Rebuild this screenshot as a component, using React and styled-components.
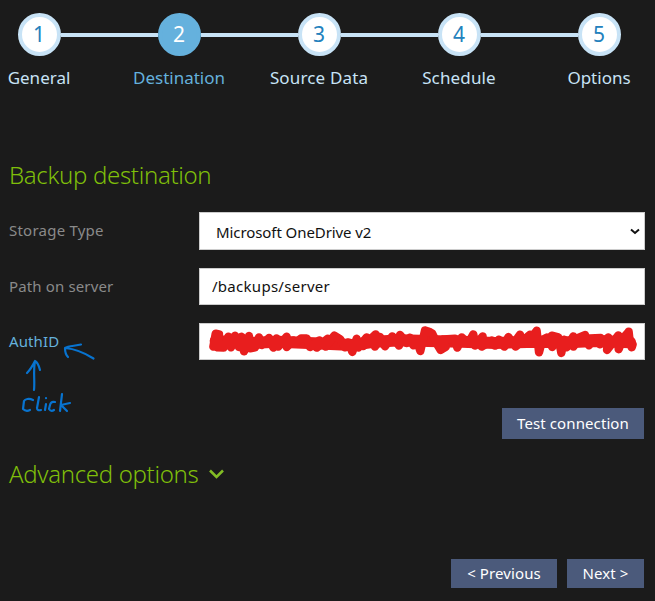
import React from "react";
import styled, { createGlobalStyle } from "styled-components";

const Global = createGlobalStyle`
  * { box-sizing: border-box; }
  body { margin: 0; background: #1b1b1b; overflow: hidden; }
`;

const Page = styled.main`
  width: 655px;
  height: 601px;
  overflow: hidden;
  background: #1b1b1b;
  font-family: "Noto Sans", sans-serif;
  font-size: 16px;
`;

const Steps = styled.ol`
  display: grid;
  grid-template-columns: repeat(5, 140px);
  width: 700px;
  height: 150px;
  margin: 0 0 0 -31px;
  padding: 13px 0 0;
  list-style: none;
`;

const Step = styled.li`
  display: grid;
  grid-template-columns: 1fr 43px 1fr;
  grid-template-rows: 43px 44px;
  align-items: center;
  justify-items: center;
`;

const Connector = styled.span`
  width: 100%;
  height: 4px;
  margin-top: 1px;
  background: ${(p) => (p.$hidden ? "transparent" : "#c8e3f6")};
`;

const Bullet = styled.span`
  width: 43px;
  height: 43px;
  border: 4px solid ${(p) => (p.$active ? "#65b1dd" : "#c8e3f6")};
  border-radius: 50%;
  background: ${(p) => (p.$active ? "#65b1dd" : "#fff")};
  color: ${(p) => (p.$active ? "#fff" : "#2381bd")};
  font-size: 21px;
  line-height: 35px;
  text-align: center;
`;

const StepLabel = styled.span`
  grid-column: 1 / -1;
  font-size: 17px;
  line-height: 22px;
  letter-spacing: ${(p) => p.$spacing || 0}px;
  white-space: nowrap;
  color: ${(p) => (p.$active ? "#65b1dd" : "#c8e3f6")};
`;

const Heading = styled.h2`
  display: flex;
  align-items: center;
  height: 32px;
  margin: ${(p) => p.$top || 0}px 0 0 9px;
  padding-bottom: 3px;
  color: #7fbf0a;
  font-size: 24px;
  font-weight: 300;
  letter-spacing: -0.33px;
  gap: 11px;
`;

const Form = styled.form`
  display: grid;
  gap: 18px;
  padding: 20px 10px 0 9px;
`;

const Row = styled.div`
  display: grid;
  grid-template-columns: 190px 446px;
  align-items: center;
  height: ${(p) => p.$height || 37}px;
`;

const Label = styled.label`
  padding-bottom: 2px;
  color: ${(p) => (p.$link ? "#65b1dd" : "#8a8a8a")};
  font-size: 15px;
  letter-spacing: ${(p) => p.$spacing || 0}px;
`;

const Field = styled.div`
  display: flex;
  align-items: center;
  justify-content: space-between;
  height: 100%;
  padding: ${(p) => p.$padding || "0"};
  border: 1px solid #ccc;
  background: #fff;
  color: #111;
  font-size: 15px;
  letter-spacing: ${(p) => p.$spacing || 0}px;
`;

const Scribble = styled.svg`
  display: block;
  flex: none;
  width: 446px;
  height: 37px;
  margin: -1px;
`;

const Note = styled.svg`
  display: block;
  width: 100px;
  height: 80px;
  margin: -20px 0 -12px;
`;

const Actions = styled.div`
  display: flex;
  justify-content: flex-end;
  gap: 10px;
  margin-top: ${(p) => p.$top || 0}px;
  padding-right: 11px;
`;

const Button = styled.button`
  width: ${(p) => p.$width}px;
  height: ${(p) => p.$height || 29}px;
  padding: 0 0 2px;
  border: 0;
  background: #4b5a7b;
  color: #fff;
  font: 15px "Noto Sans", sans-serif;
  letter-spacing: 0.1px;
`;

const steps = [
  { name: "General" },
  { name: "Destination" },
  { name: "Source Data", spacing: 0.15 },
  { name: "Schedule", spacing: 0.15 },
  { name: "Options" },
];

const zigzag =
  "55 95 62 56 72 58 66 97 86 98 100 65 108 97 120 62 132 96 140 65 147 109 162 63 165 100 180 97 192 67 200 90 222 69 235 98 245 70 250 95 275 65 275 96 295 76 300 85 318 70 335 70 345 96 373 76 365 98 398 71 392 95 418 62 435 72 450 97 460 82 472 111 485 71 490 98 515 67 505 93 542 58 540 95 555 66 570 94 592 64 612 92 615 60 635 84 645 68 655 91 668 85 676 108 690 46 702 50 712 56 728 90 737 105 752 96 745 73 780 71 787 98 800 67 820 85 835 58 840 92 863 64 860 95 890 77 900 92 912 74 928 95 940 66 955 87 975 59 962 95 1005 59 995 86 1025 47 1032 112 1042 75 1055 68 1072 96 1070 62 1090 67 1099 114 1107 74 1115 97 1135 64 1135 95 1152 68 1170 60 1182 91 1185 70 1217 69 1215 88 1240 67 1236 105 1270 61 1271 103 1284 70 1300 52 1302 87 1301 50 1305 86 1313 88 1310 97";

function Chevron({ width, height, color, stroke }) {
  return (
    <svg width={width} height={height} viewBox={`0 0 ${width} ${height}`} fill="none" stroke={color} strokeWidth={stroke}>
      <path d={`M1 1.5 L${width / 2} ${height - 2} L${width - 1} 1.5`} />
    </svg>
  );
}

export default function App() {
  return (
    <Page>
      <Global />
      <Steps>
        {steps.map(({ name, spacing }, i) => (
          <Step key={name}>
            <Connector $hidden={i === 0} />
            <Bullet $active={i === 1}>{i + 1}</Bullet>
            <Connector $hidden={i === 4} />
            <StepLabel $active={i === 1} $spacing={spacing}>{name}</StepLabel>
          </Step>
        ))}
      </Steps>

      <Heading $top={10}>Backup destination</Heading>
      <Form>
        <Row $height={38}>
          <Label $spacing={0.23}>Storage Type</Label>
          <Field $padding="1px 4px 0 16px" $spacing={-0.08}>
            Microsoft OneDrive v2
            <Chevron width={10} height={7} color="#111" stroke={2} />
          </Field>
        </Row>
        <Row>
          <Label $spacing={0.14}>Path on server</Label>
          <Field $padding="0 12px 2px" $spacing={0.28}>/backups/server</Field>
        </Row>
        <Row>
          <Label $link $spacing={0.1}>AuthID</Label>
          <Field>
            <Scribble viewBox="12 24 1338 111" fill="none" stroke="#e81e1e" strokeLinecap="round" strokeLinejoin="round">
              <path d="M62 78L160 84L250 80L340 84L472 90L540 80L620 76L700 78L800 80L900 84L1025 80L1120 82L1200 78L1305 82" strokeWidth="36" />
              <polyline points={zigzag} strokeWidth="25" />
            </Scribble>
          </Field>
        </Row>
      </Form>

      <Note viewBox="0 340 100 80" fill="none" stroke="#0873cf" strokeWidth="2.2" strokeLinecap="round" strokeLinejoin="round">
        <path d="M93.500 358.500C85 353 76 349 65 348M81 344.500C75 346 68 346 65 348C65 351 66 355 68 357" />
        <path d="M34 390C35 381 33 371 35 361M27 373C30 370 33 365 35 361C37 362 39 366 40 370" />
        <path d="M33 400C29 398 25 399 24 401L23 409C25 411 28 411 30 410M39 397L37 408Q37 411 41 410M46 404L45 410M46 398V398.2M55 402Q51 401 50 405L49 409Q51 412 54 410M62 394L60 411M70 403L61 405L67 411" />
      </Note>

      <Actions>
        <Button $width={142} $height={31}>Test connection</Button>
      </Actions>
      <Heading $top={20}>
        Advanced options
        <Chevron width={15} height={10} color="#83bd25" stroke={2.5} />
      </Heading>
      <Actions as="footer" $top={68}>
        <Button $width={106}>&lt; Previous</Button>
        <Button $width={77}>Next &gt;</Button>
      </Actions>
    </Page>
  );
}
